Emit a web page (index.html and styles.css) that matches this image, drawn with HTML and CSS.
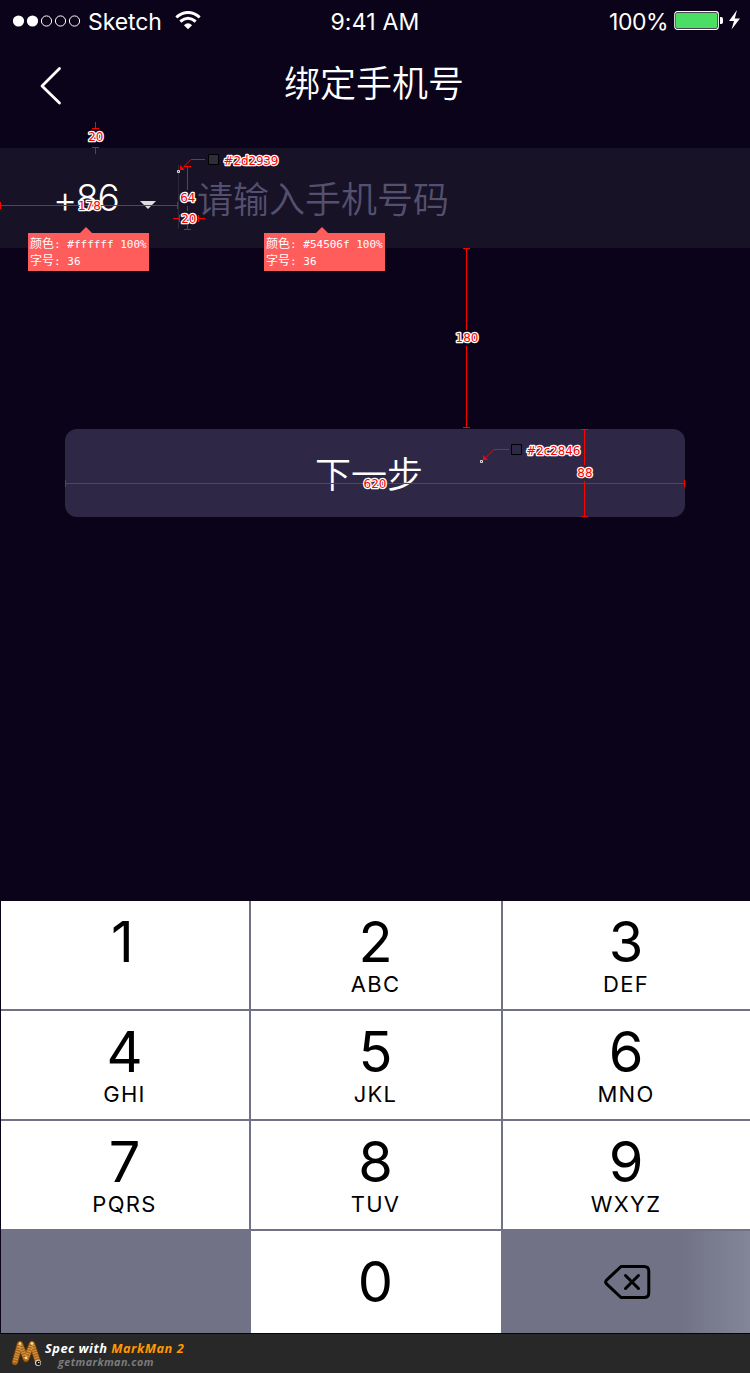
FILE: index.html
```html
<!DOCTYPE html>
<html lang="zh-CN">
<head>
<meta charset="utf-8">
<title>绑定手机号</title>
<link rel="stylesheet" href="styles.css">
</head>
<body>
<div class="screen">
  <header class="status">
    <div class="carrier">
      <svg class="dots" width="68" height="12" viewBox="0 0 68 12"><g fill="#fff"><circle cx="5.5" cy="6" r="5.6"/><circle cx="19.5" cy="6" r="5.6"/></g><g fill="none" stroke="#fff"><circle cx="33.5" cy="6" r="5.1"/><circle cx="47.5" cy="6" r="5.1"/><circle cx="61.5" cy="6" r="5.1"/></g></svg>
      <span class="network">Sketch</span>
      <svg class="wifi" width="26" height="19" viewBox="0 0 26 19"><g fill="none" stroke="#fff" stroke-width="3"><path d="M1.3 6.3Q13 -3.3 24.7 6.3"/><path d="M5.3 10.5Q13 4 20.7 10.5"/></g><path d="M13 18.3L8.9 14.2Q13 10.4 17.1 14.2Z" fill="#fff"/></svg>
    </div>
    <span class="time">9:41 AM</span>
    <div class="power">
      <span class="percent">100%</span>
      <svg width="68" height="22" viewBox="0 0 68 22"><rect x=".8" y="1.7" width="43.5" height="17.6" rx="2.5" fill="none" stroke="#fff" stroke-width="1.2"/><rect x="2" y="3" width="41" height="15" rx="1" fill="#4cde64"/><path d="M46 7h1.2q1.8 0 1.8 2v3q0 2-1.8 2H46z" fill="#fff"/><path d="M63 0L55 11h5l-2.5 8.5L66 8.5h-5.2z" fill="#fff"/></svg>
    </div>
  </header>
  <nav class="nav">
    <svg class="back" width="24" height="40" viewBox="0 0 24 40"><path d="M20.5 2.500L3 20L20.500 37" fill="none" stroke="#fff" stroke-width="2.800" stroke-linecap="round" stroke-linejoin="round"/></svg>
    <h1 class="title">绑定手机号</h1>
  </nav>
  <section class="phone">
    <div class="code"><span class="prefix"><span class="plus">+</span>86</span><span class="caret"></span></div>
    <span class="divider"></span>
    <span class="placeholder">请输入手机号码</span>
  </section>
  <button class="next">下一步</button>
  <div class="keypad">
    <div class="key"><b class="one">1</b></div>
    <div class="key"><b>2</b><i>ABC</i></div>
    <div class="key"><b>3</b><i>DEF</i></div>
    <div class="key"><b>4</b><i>GHI</i></div>
    <div class="key"><b>5</b><i>JKL</i></div>
    <div class="key"><b>6</b><i>MNO</i></div>
    <div class="key"><b>7</b><i>PQRS</i></div>
    <div class="key"><b>8</b><i>TUV</i></div>
    <div class="key"><b>9</b><i>WXYZ</i></div>
    <div class="blank"></div>
    <div class="key zero"><b>0</b></div>
    <div class="delete">
      <svg width="48" height="36" viewBox="0 0 48 36"><g fill="none" stroke="#000" stroke-width="3" stroke-linecap="round" stroke-linejoin="round"><path d="M18 2.500H41Q45.800 2.500 45.800 7.300V28.700Q45.800 33.500 41 33.500H18L3.300 19.700Q2 18 3.300 16.300Z"/><path d="M22.500 11.500L35.500 24.500M35.500 11.500L22.500 24.500"/></g></svg>
    </div>
  </div>
  <footer class="credit">
    <svg class="logo" width="34" height="28" viewBox="0 0 34 28"><g fill="none" stroke-linecap="round" stroke-linejoin="round"><path d="M4 22L9 4L15 19L21 4L27 22" stroke="#5b3209" stroke-width="7"/><path d="M4 22L9 4L15 19L21 4L27 22" stroke="#a8651a" stroke-width="5.500"/><path d="M4 22L9 4L15 19L21 4L27 22" stroke="#d99a48" stroke-width="4.500" stroke-dasharray="1 1.500" stroke-linecap="butt"/></g><g fill="#ffdf8a"><circle cx="9" cy="3.500" r="1.300"/><circle cx="21" cy="3.500" r="1.300"/><circle cx="15" cy="18" r="1.300"/></g><circle cx="27" cy="23" r="3" fill="#ddd"/><circle cx="27.300" cy="23" r="2.200" fill="#111"/><circle cx="27.800" cy="22.500" r=".7" fill="#fff"/></svg>
    <div class="creditText"><div class="made">Spec with <span class="brand">MarkMan 2</span></div><div class="site">getmarkman.com</div></div>
  </footer>

  <svg class="marks" width="750" height="530" viewBox="0 0 750 530">
    <g class="lines" shape-rendering="crispEdges">
      <path d="M95.5 122v6M92 128.500h7M92 147.500h7M95.500 148v6"/>
      <path d="M0 205.500h178M.5 202v7M177.500 202v7"/>
      <path d="M187.500 166v64M184 166.500h7M184 229.500h7"/>
      <path d="M173 218.500h6M179.500 215v7M198.500 215v7M199 218.500h6"/>
      <path d="M466.500 248v180M463 248.500h7M463 427.500h7"/>
      <path d="M65 483.500h620M65.500 480v7M684.500 480v7"/>
      <path d="M584.500 429v88M581 429.500h7M581 516.500h7"/>
    </g>
    <path class="gapA" d="M184 190h7v16h-7zM184 211h7v14h-7z"/>
    <path class="gapB" d="M463 330h7v16h-7z"/>
    <path class="gapC" d="M581 465h7v16h-7z"/>
    <path class="lines" d="M205 159.500h-14l-8 8M509 449.500h-15l-8 8"/>
    <path fill="#f00" d="M180 165v5h5zM483 455v5h5z"/>
    <path fill="#302c3c" stroke="#000" d="M208.500 154.500h10v10h-10z"/>
    <path fill="#2c2846" stroke="#000" d="M511.500 444.500h10v10h-10z"/>
    <path fill="#333" stroke="#ddd" d="M177.500 170.500h2v2h-2zM480.500 460.500h2v2h-2z"/>
    <g class="labels">
      <text x="95.800" y="141">20</text><text x="89.500" y="210">178</text><text x="187.800" y="202">64</text><text x="188.800" y="223">20</text><text x="467" y="342">180</text><text x="375" y="488">620</text><text x="585" y="477">88</text><text x="251" y="165" textLength="55">#2d2939</text><text x="553.300" y="455" textLength="54">#2c2846</text>
    </g>
  </svg>
  <div class="tip tipCode"><div>颜色<span class="mono">: #ffffff 100%</span></div><div>字号<span class="mono">: 36</span></div></div>
  <div class="tip tipInput"><div>颜色<span class="mono">: #54506f 100%</span></div><div>字号<span class="mono">: 36</span></div></div>
</div>
</body>
</html>
```
FILE: styles.css
```css
* { box-sizing: border-box; }
body { margin: 0; background: #0a0319; }
.screen { position: relative; width: 750px; height: 1373px; display: flex; flex-direction: column; overflow: hidden; color: #fff; font-family: "Inter", "Noto Sans CJK SC", sans-serif; }
.status { height: 40px; display: grid; grid-template-columns: 1fr auto 1fr; align-items: center; padding: 2px 8px 0 13px; font-size: 23px; line-height: 36px; }
.carrier, .power { display: flex; align-items: center; }
.carrier { gap: 7px; }
.network { padding-top: 2px; letter-spacing: -0.1px; }
.time { padding-top: 2px; margin: 0 5px 0 0; letter-spacing: 0.2px; }
.percent { padding-top: 2px; letter-spacing: -0.5px; }
.wifi { margin: -2px 0 0 6px; }
.power { justify-content: flex-end; gap: 6px; }
.power svg { margin-top: -1px; }
.nav { height: 108px; display: grid; grid-template-columns: 40px 1fr 40px; padding: 0 39px; align-items: start; }
.back { margin-top: 26px; }
.title { margin: 14px 2px 0 0; text-align: center; font: 350 36px/54px "Noto Sans CJK SC", sans-serif; }
.phone { height: 100px; display: flex; align-items: center; background: #181227; }
.code { width: 178px; display: flex; align-items: center; padding-left: 53px; }
.prefix { width: 87px; font-size: 37px; line-height: 44px; font-weight: 300; letter-spacing: -1.2px; }
.plus { display: inline-block; line-height: 36px; transform: translateY(2px); }
.caret { border: 8px solid transparent; border-top-color: #ddd; border-bottom: 0; margin-top: 13px; }
.divider { width: 1px; height: 64px; margin-top: -3px; background: #2d2939; }
.placeholder { margin: -3px 0 0 18px; font: 350 36px/54px "Noto Sans CJK SC", sans-serif; color: #54506f; }
.next { width: 620px; height: 88px; margin: 181px 0 0 65px; padding: 0 12px 3px 0; border: 0; border-radius: 12px; background: #2e2846; color: #fff; font: 350 36px/54px "Noto Sans CJK SC", sans-serif; }
.keypad { margin: 384px 0 0 1px; height: 432px; display: grid; grid-template-columns: 248px 250px 247px; grid-template-rows: 108px 108px 108px 102px; gap: 2px; background: #727286; }
.key { background: #fff; color: #000; display: flex; flex-direction: column; align-items: center; padding-right: 1px; }
.key b { font-weight: 400; font-size: 56px; line-height: 60px; margin-top: 11px; }
.key .one { margin-right: 4px; }
.key i { font-style: normal; font-size: 22px; line-height: 24px; letter-spacing: 1.3px; }
.zero b { margin-top: 21px; }
.delete { display: flex; align-items: flex-start; padding: 33px 0 0 100px; background: linear-gradient(90deg, #727286 72%, #828698); }
.credit { height: 40px; border-top: 1px solid #05030c; background: #282828; display: flex; align-items: flex-start; padding: 6px 0 0 11px; }
.creditText { font-family: "Open Sans", sans-serif; font-style: italic; font-weight: 700; white-space: nowrap; }
.made { font-size: 12.8px; line-height: 16px; letter-spacing: 0.5px; }
.brand { color: #f90; }
.site { margin-left: 13px; font-size: 10.8px; line-height: 11px; letter-spacing: 0.4px; color: #7b7b7b; }
.marks { position: absolute; left: 0; top: 0; }
.lines { fill: none; stroke: #f00; stroke-width: 1; }
.gapA { fill: #181227; }
.gapB { fill: #0a0319; }
.gapC { fill: #2e2846; }
.labels text { font: 12px "DejaVu Sans", sans-serif; fill: #f00; stroke: #fff; stroke-width: 2.6px; stroke-linejoin: round; paint-order: stroke; text-anchor: middle; }
.tip { position: absolute; top: 233px; width: 121px; height: 38px; padding: 1px 2px; background: #ff5c5c; font: 12px/17px "Noto Sans CJK SC", sans-serif; white-space: nowrap; }
.tip::before { content: ""; position: absolute; left: 52px; top: -6px; border: 6px solid transparent; border-top: 0; border-bottom-color: #ff5c5c; }
.tipCode { left: 28px; }
.tipInput { left: 264px; }
.mono { font: 11px "DejaVu Sans Mono", monospace; }
```
